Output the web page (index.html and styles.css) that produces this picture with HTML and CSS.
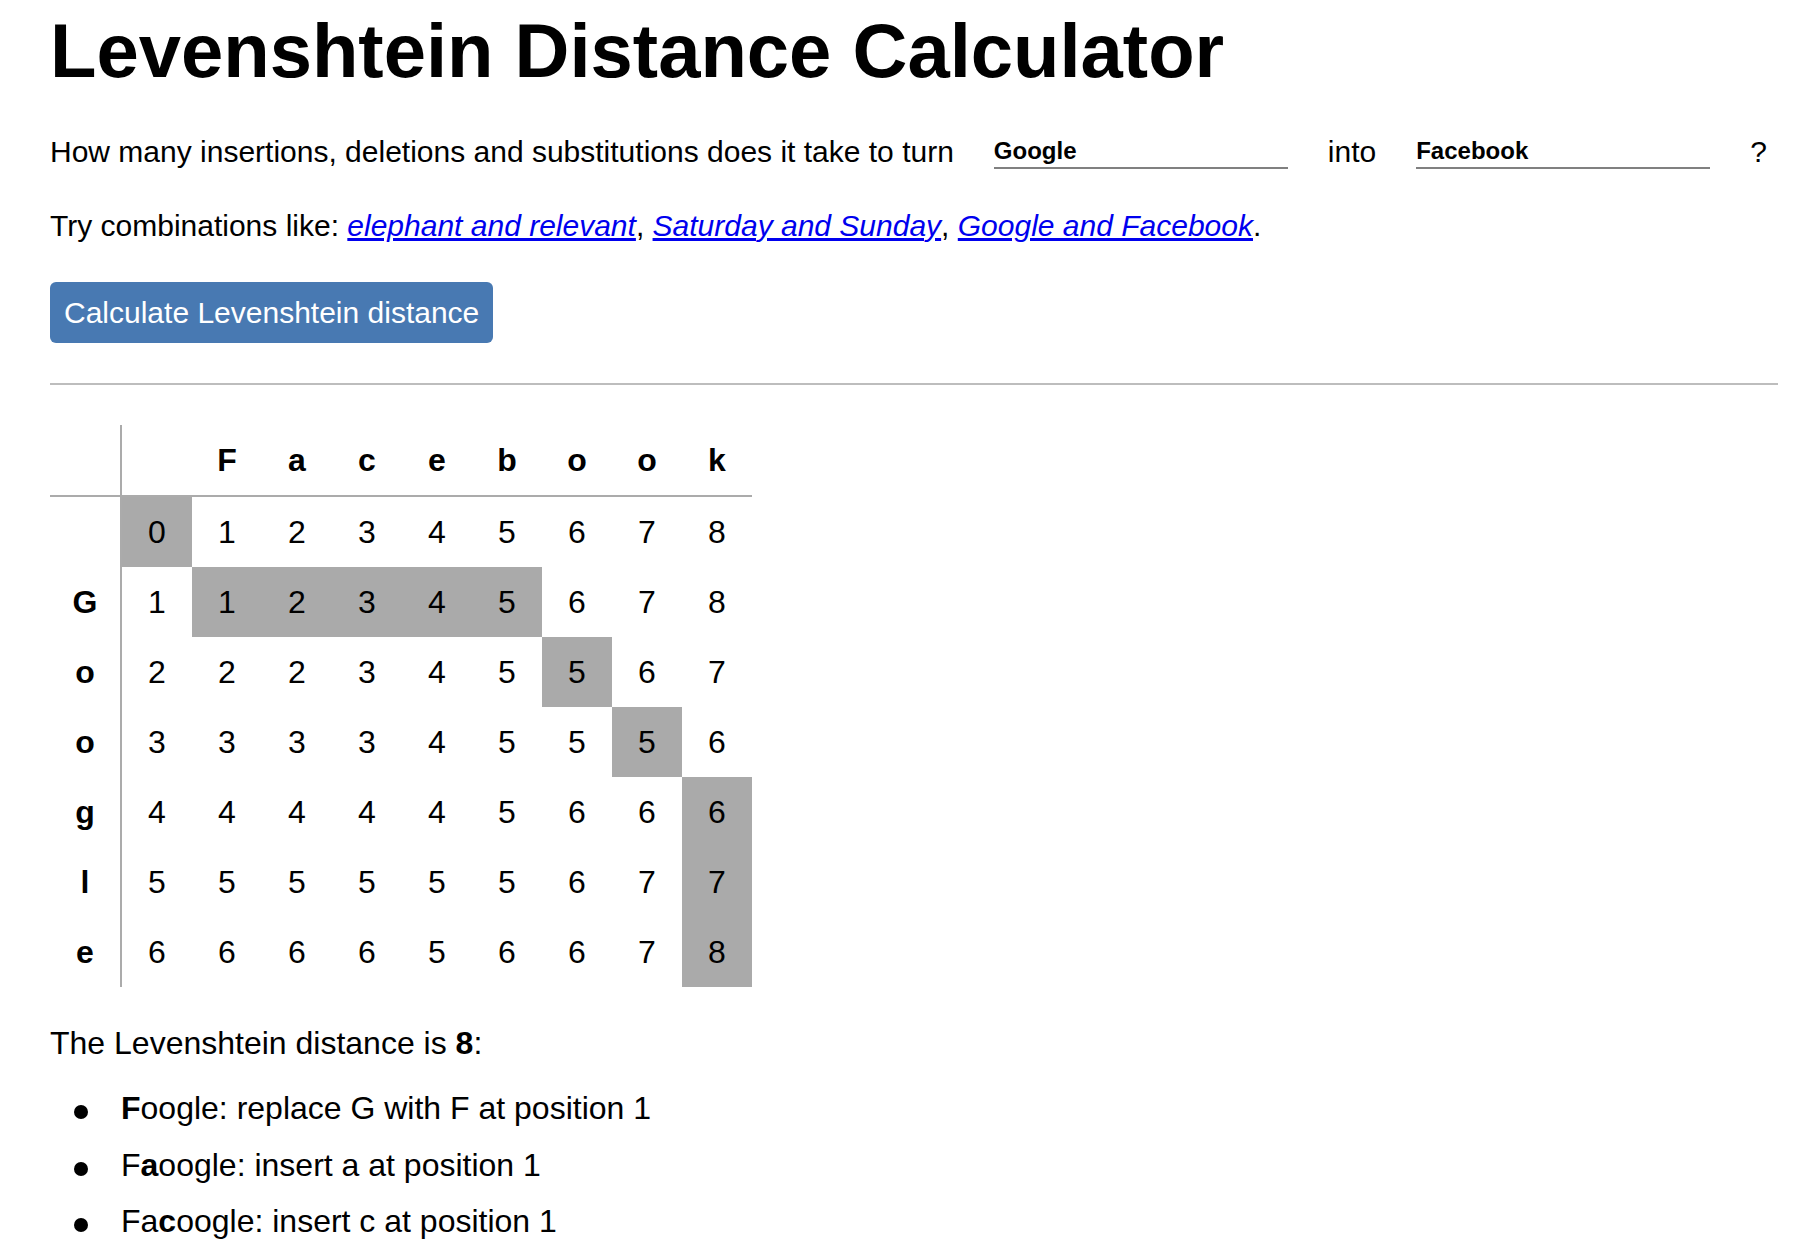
FILE: index.html
```html
<!DOCTYPE html>
<html lang="en">
<head>
<meta charset="utf-8">
<title>Levenshtein Distance Calculator</title>
<link rel="stylesheet" href="styles.css">
</head>
<body>
<main class="page">
  <h1 class="title">Levenshtein Distance Calculator</h1>

  <div class="question">
    <span class="q-text">How many insertions, deletions and substitutions does it take to turn</span>
    <input class="word-input" type="text" value="Google">
    <span class="q-text">into</span>
    <input class="word-input" type="text" value="Facebook">
    <span class="q-text">?</span>
  </div>

  <p class="examples">Try combinations like: <a href="#">elephant and relevant</a>, <a href="#">Saturday and Sunday</a>, <a href="#">Google and Facebook</a>.</p>

  <div class="actions">
    <button class="calc-btn" type="button">Calculate Levenshtein distance</button>
  </div>

  <hr class="divider">

  <table class="matrix">
    <thead>
      <tr>
        <th class="corner"></th>
        <th class="col-head"></th>
        <th class="col-head">F</th>
        <th class="col-head">a</th>
        <th class="col-head">c</th>
        <th class="col-head">e</th>
        <th class="col-head">b</th>
        <th class="col-head">o</th>
        <th class="col-head">o</th>
        <th class="col-head">k</th>
      </tr>
    </thead>
    <tbody>
      <tr>
        <th class="row-head"></th>
        <td class="path">0</td><td>1</td><td>2</td><td>3</td><td>4</td><td>5</td><td>6</td><td>7</td><td>8</td>
      </tr>
      <tr>
        <th class="row-head">G</th>
        <td>1</td><td class="path">1</td><td class="path">2</td><td class="path">3</td><td class="path">4</td><td class="path">5</td><td>6</td><td>7</td><td>8</td>
      </tr>
      <tr>
        <th class="row-head">o</th>
        <td>2</td><td>2</td><td>2</td><td>3</td><td>4</td><td>5</td><td class="path">5</td><td>6</td><td>7</td>
      </tr>
      <tr>
        <th class="row-head">o</th>
        <td>3</td><td>3</td><td>3</td><td>3</td><td>4</td><td>5</td><td>5</td><td class="path">5</td><td>6</td>
      </tr>
      <tr>
        <th class="row-head">g</th>
        <td>4</td><td>4</td><td>4</td><td>4</td><td>4</td><td>5</td><td>6</td><td>6</td><td class="path">6</td>
      </tr>
      <tr>
        <th class="row-head">l</th>
        <td>5</td><td>5</td><td>5</td><td>5</td><td>5</td><td>5</td><td>6</td><td>7</td><td class="path">7</td>
      </tr>
      <tr>
        <th class="row-head">e</th>
        <td>6</td><td>6</td><td>6</td><td>6</td><td>5</td><td>6</td><td>6</td><td>7</td><td class="path">8</td>
      </tr>
    </tbody>
  </table>

  <p class="result">The Levenshtein distance is <b>8</b>:</p>

  <ul class="steps">
    <li><b>F</b>oogle: replace G with F at position 1</li>
    <li>F<b>a</b>oogle: insert a at position 1</li>
    <li>Fa<b>c</b>oogle: insert c at position 1</li>
  </ul>
</main>
</body>
</html>
```

FILE: styles.css
```css
html, body {
  margin: 0;
  padding: 0;
  background: #ffffff;
}

body {
  font-family: "Liberation Sans", Arial, Helvetica, sans-serif;
  font-size: 30px;
  line-height: 34.5px;
  color: #000000;
}

.page {
  padding: 0 38px 0 50px;
}

.title {
  margin: 7px 0 0;
  font-size: 76px;
  line-height: 88px;
  font-weight: bold;
}

.question {
  display: flex;
  align-items: flex-start;
  gap: 40px;
  margin-top: 40px;
}

.q-text {
  white-space: nowrap;
}

.word-input {
  box-sizing: border-box;
  width: 294px;
  height: 30px;
  margin: 4px 0 0;
  padding: 0 0 4px;
  border: none;
  border-bottom: 2px solid #808080;
  border-radius: 0;
  outline: none;
  background: transparent;
  font-family: "Liberation Sans", Arial, Helvetica, sans-serif;
  font-size: 24px;
  font-weight: bold;
  color: #000000;
  -webkit-appearance: none;
  appearance: none;
}

.examples {
  margin: 39px 0 0;
}

.examples a {
  color: #0000ee;
  font-style: italic;
  text-decoration: underline;
}

.actions {
  margin-top: 39px;
}

.calc-btn {
  display: inline-block;
  margin: 0;
  padding: 13px 14px;
  border: none;
  border-radius: 6px;
  background: #4879b2;
  color: #ffffff;
  font-family: "Liberation Sans", Arial, Helvetica, sans-serif;
  font-size: 30px;
  line-height: 35px;
  cursor: pointer;
}

.divider {
  margin: 40px 0 0;
  height: 0;
  border: none;
  border-top: 2px solid #bdbdbd;
}

.matrix {
  margin-top: 40px;
  border-collapse: separate;
  border-spacing: 0;
  font-size: 32px;
  line-height: 37px;
}

.matrix th,
.matrix td {
  width: 70px;
  height: 70px;
  padding: 0;
  text-align: center;
  vertical-align: middle;
}

.matrix th {
  font-weight: bold;
}

.matrix thead th {
  border-bottom: 2px solid #ababab;
}

.matrix .corner,
.matrix .row-head {
  border-right: 2px solid #ababab;
}

.matrix td {
  font-weight: normal;
}

.matrix .path {
  background: #aaaaaa;
}

.result {
  margin: 38px 0 0;
  font-size: 32px;
  line-height: 37px;
}

.steps {
  margin: 28px 0 0;
  padding: 0 0 0 71px;
  list-style: none;
  font-size: 32px;
  line-height: 37px;
}

.steps li + li {
  margin-top: 19.5px;
}

.steps li::before {
  content: "";
  display: inline-block;
  width: 14px;
  height: 14px;
  margin-left: -47px;
  margin-right: 33px;
  border-radius: 50%;
  background: #000000;
  vertical-align: baseline;
}
```
